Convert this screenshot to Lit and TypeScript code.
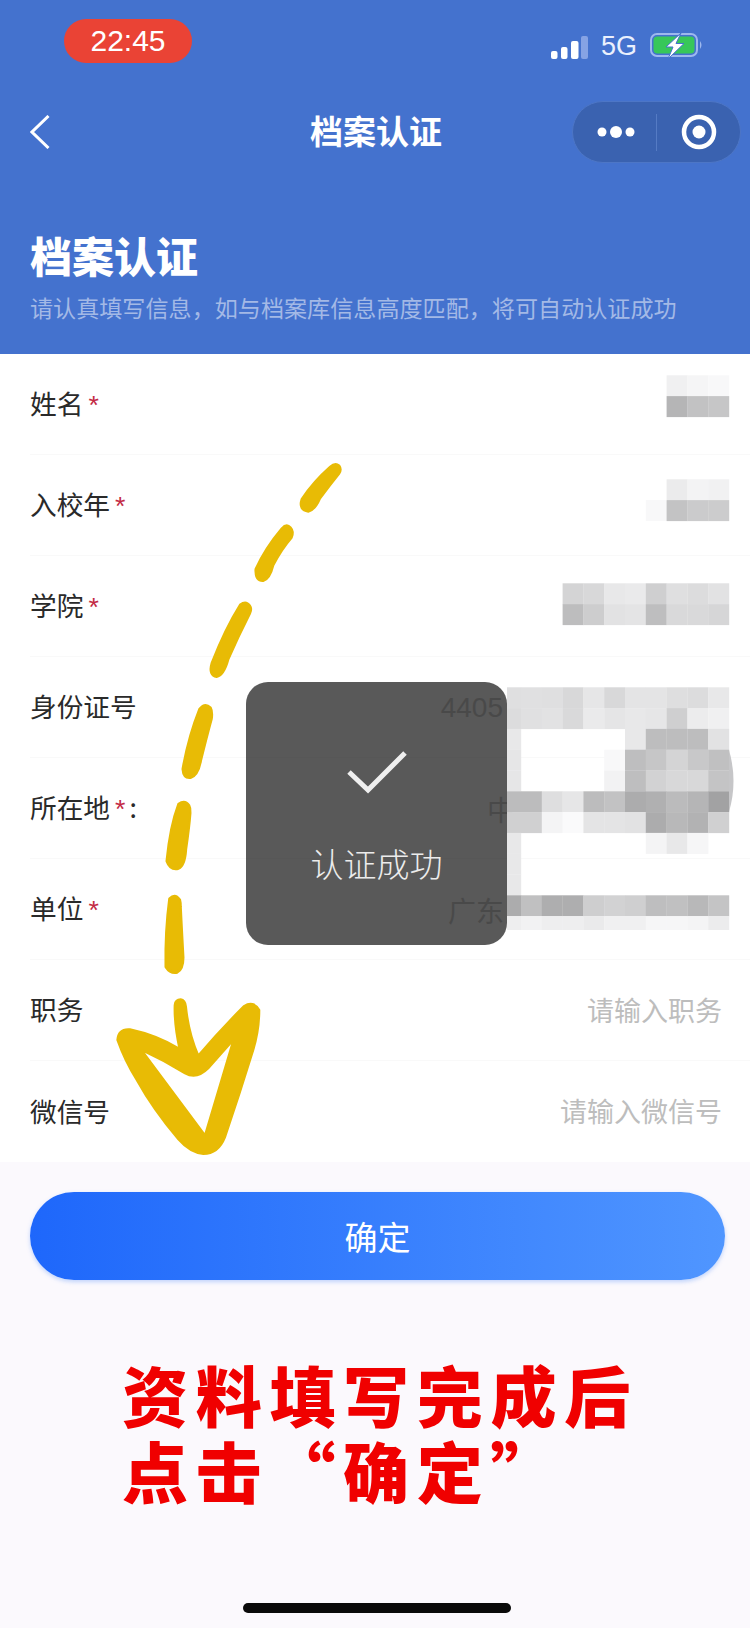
import { LitElement, html, svg, css } from 'lit';
import { customElement } from 'lit/decorators.js';

interface FormRow {
    label: string;
    required?: boolean;
    colon?: boolean;
    value?: string;
    valueGap?: number;
    placeholder?: string;
}

const ROWS: FormRow[] = [
    { label: '姓名', required: true },
    { label: '入校年', required: true },
    { label: '学院', required: true },
    { label: '身份证号', value: '4405', valueGap: 219 },
    { label: '所在地', required: true, colon: true, value: '中', valueGap: 207 },
    { label: '单位', required: true, value: '广东', valueGap: 218 },
    { label: '职务', placeholder: '请输入职务' },
    { label: '微信号', placeholder: '请输入微信号' },
];

// mosaic over the personal data: grid row, first column, grey levels
const CELL = 20.8;
const MOSAIC: [number, number, number[]][] = [
    [0, 8, [240, 245, 248]],
    [1, 8, [181, 194, 198]],
    [5, 8, [235, 243, 241]],
    [6, 7, [248, 195, 203, 204]],
    [10, 3, [212, 216, 232, 234, 207, 223, 220, 226]],
    [11, 3, [189, 205, 226, 228, 190, 217, 217, 214]],
    [15, 0, [223, 224, 223, 216, 230, 216, 228, 228, 222, 220, 232]],
    [16, 0, [220, 224, 226, 217, 234, 229, 232, 230, 207, 236, 240]],
    [17, 0, [232]],
    [17, 6, [232, 189, 189, 189, 226]],
    [18, 0, [230]],
    [18, 5, [248, 190, 198, 212, 200, 192]],
    [19, 0, [230]],
    [19, 5, [242, 190, 210, 216, 216, 196]],
    [20, 0, [188, 188, 222, 230, 188, 194, 172, 176, 187, 181, 162]],
    [21, 0, [208, 208, 244, 250, 228, 228, 226, 172, 184, 178, 208]],
    [22, 0, [232]],
    [22, 7, [244, 232, 246]],
    [23, 0, [232]],
    [24, 0, [232]],
    [25, 0, [172, 192, 174, 174, 206, 210, 207, 190, 192, 184, 196]],
    [26, 0, [238, 242, 238, 238, 234, 240, 240, 246, 246, 244, 236]],
];

// hand drawn dashes of the yellow arrow, traced as filled outlines
const DASHES = [
    'M718 35 Q705 28 690 38 Q640 70 605 108 Q595 130 625 133 Q645 130 660 105 Q690 75 718 50 Q725 42 718 35 Z',
    'M572 170 Q560 160 545 172 Q495 215 467 260 Q465 285 490 284 Q510 280 520 250 Q545 215 575 190 Q582 178 572 170 Z',
    'M450 340 Q438 328 420 338 Q375 390 335 465 Q325 490 350 493 Q372 490 385 455 Q415 405 450 355 Q456 346 450 340 Z',
    'M332 562 Q315 550 298 565 Q265 625 248 695 Q250 715 272 713 Q295 708 303 675 Q320 625 335 585 Q338 570 332 562 Z',
    'M268 775 Q255 762 235 772 Q210 820 200 895 Q210 915 235 911 Q255 905 258 870 Q268 820 271 790 Q272 780 268 775 Z',
    'M240 980 Q225 965 208 978 Q195 1050 197 1125 Q210 1140 232 1137 Q250 1130 250 1105 Q245 1040 242 995 Q242 985 240 980 Z',
];

@customElement('app-root')
export class AppRoot extends LitElement {
    static override styles = css`
        :host {
            display: block;
            width: 750px;
            height: 1628px;
            background: #fbf9fd;
            font-family: "Noto Sans CJK SC", "Noto Sans", sans-serif;
            color: #2a2a2a;
            overflow: hidden;
        }

        .page {
            position: relative;
            width: 750px;
            height: 1628px;
        }

        .header {
            height: 354px;
            background: #4472ce;
            color: #fff;
        }

        .status {
            height: 82px;
            box-sizing: border-box;
            padding: 19px 47px 0 64px;
            display: flex;
            justify-content: space-between;
            align-items: flex-start;
        }

        .time {
            width: 128px;
            height: 44px;
            border-radius: 22px;
            background: #ea4335;
            font-family: "Liberation Sans", sans-serif;
            font-size: 30px;
            line-height: 44px;
            text-align: center;
        }

        .indicators {
            display: flex;
            align-items: flex-end;
            height: 40px;
        }

        .net {
            font-family: "Liberation Sans", sans-serif;
            font-size: 27px;
            line-height: 26px;
            color: #eaf0fd;
            margin: 0 13px;
        }

        .nav {
            margin-top: 19px;
            height: 62px;
            padding: 0 9px;
            display: grid;
            grid-template-columns: 1fr auto 1fr;
            align-items: center;
        }

        .back {
            margin-left: 21px;
            display: block;
        }

        .nav-title {
            font-size: 33px;
            font-weight: 700;
            line-height: 58px;
            padding: 0 0 4px 2px;
        }

        .capsule {
            justify-self: end;
            width: 169px;
            height: 62px;
            box-sizing: border-box;
            border-radius: 31px;
            background: #3a62b0;
            border: 1px solid #4d76c6;
            display: flex;
            align-items: center;
        }

        .capsule svg {
            flex: 1;
            display: block;
        }

        .capsule i {
            width: 1px;
            height: 37px;
            background: #557bc4;
        }

        .intro {
            margin-top: 67px;
            padding-left: 30px;
        }

        .intro h1 {
            margin: 0;
            font-size: 42px;
            line-height: 50px;
            font-weight: 900;
        }

        .intro p {
            margin: 12px 0 0;
            font-size: 23.1px;
            line-height: 30px;
            color: #a3b9e6;
            white-space: nowrap;
        }

        .form {
            background: #fff;
        }

        .row {
            height: 101px;
            box-sizing: border-box;
            margin-left: 30px;
            padding-right: 28px;
            border-bottom: 1px solid #f9f9f9;
            display: flex;
            align-items: center;
            justify-content: space-between;
            font-size: 26.7px;
        }

        .row:last-child {
            border-bottom: 0;
        }

        .label {
            padding-bottom: 3px;
        }

        .star {
            color: #c32a45;
            font-family: "Liberation Sans", sans-serif;
            margin-left: 5px;
        }

        .colon {
            margin-left: 4px;
        }

        .value {
            font-family: "Liberation Sans", "Noto Sans CJK SC", sans-serif;
            font-size: 28px;
            padding-top: 2px;
            color: #d2d2d2;
        }

        .placeholder {
            color: #bdbdbd;
            font-size: 27px;
            padding-bottom: 2px;
        }

        .submit {
            margin: 30px 25px 0 30px;
            height: 88px;
            border-radius: 44px;
            background: linear-gradient(90deg, #1e67fb, #5096ff);
            box-shadow: 0 2px 4px rgba(80, 140, 250, 0.35);
            color: #fff;
            font-size: 33px;
            line-height: 88px;
            text-align: center;
        }

        .note {
            margin-top: 75px;
            padding-left: 122px;
            color: #f00000;
            font-size: 66px;
            line-height: 76px;
            font-weight: 900;
            letter-spacing: 7.7px;
            white-space: nowrap;
        }

        .home {
            margin: 96px 0 0 243px;
            width: 268px;
            height: 10px;
            border-radius: 5px;
            background: #0a0a0a;
        }

        .mosaic,
        .scribble {
            position: absolute;
            display: block;
        }

        .mosaic {
            left: 507px;
            top: 360px;
        }

        .scribble {
            left: 0;
            top: 0;
        }

        .toast {
            position: absolute;
            left: 246px;
            top: 682px;
            width: 261px;
            height: 263px;
            border-radius: 22px;
            background: rgba(0, 0, 0, 0.65);
            color: #ececec;
            display: flex;
            flex-direction: column;
            align-items: center;
        }

        .toast svg {
            margin-top: 68px;
            display: block;
        }

        .toast span {
            margin-top: 47px;
            font-size: 33px;
            line-height: 44px;
            font-weight: 300;
        }
    `;

    private _renderMosaic() {
        return html`
            <svg class="mosaic" width="230" height="570" viewBox="507 360 230 570" aria-hidden="true">
                ${MOSAIC.map(([row, first, greys]) => greys.map((grey, i) => svg`
                    <rect
                        x=${500.2 + (first + i) * CELL}
                        y=${375.3 + row * CELL}
                        width=${CELL + 0.2}
                        height=${CELL + 0.2}
                        fill=${`rgb(${grey},${grey},${Math.min(255, grey + 1)})`}
                    ></rect>
                `))}
                <path d="M729 750 Q738 781 729 812 Z" fill="#c6c6c8"></path>
            </svg>
        `;
    }

    private _renderScribble() {
        return html`
            <svg class="scribble" width="750" height="1628" viewBox="0 0 750 1628" aria-hidden="true">
                <g transform="translate(100 450) scale(0.3333 0.4592)" fill="#e8bb05" stroke="#e8bb05" stroke-width="7" stroke-linejoin="round">
                    ${DASHES.map((d) => svg`<path d=${d}></path>`)}
                </g>
                <g transform="translate(100 980) scale(0.3333)">
                    <path
                        fill="#e8bb05"
                        stroke="#e8bb05"
                        stroke-width="6"
                        stroke-linejoin="round"
                        fill-rule="evenodd"
                        d="M52 180 Q55 145 90 148 Q170 165 238 206 Q222 130 224 75 Q226 58 242 58 Q256 60 258 80 Q266 160 295 226 Q360 150 432 78 Q460 60 478 90 Q478 150 460 210 Q420 340 375 472 Q355 522 310 522 Q270 518 235 478 Q160 390 110 300 Q75 245 52 180 Z
                        M125 210 L315 465 L400 180 Q360 225 325 265 Q290 300 255 280 Q190 240 125 210 Z"
                    ></path>
                </g>
            </svg>
        `;
    }

    override render() {
        return html`
            <div class="page">
                <div class="header">
                    <div class="status">
                        <div class="time">22:45</div>
                        <div class="indicators">
                            <svg width="37" height="23" viewBox="0 0 37 23" aria-hidden="true">
                                <rect x="0" y="15" width="6.5" height="8" rx="2" fill="#fff"></rect>
                                <rect x="10" y="11" width="6.5" height="12" rx="2" fill="#fff"></rect>
                                <rect x="20" y="5" width="7.5" height="18" rx="2" fill="#fff"></rect>
                                <rect x="30" y="0" width="7" height="23" rx="2" fill="#86a3e4"></rect>
                            </svg>
                            <span class="net">5G</span>
                            <svg width="53" height="26" viewBox="0 0 53 26" aria-hidden="true">
                                <rect x="1" y="1" width="46" height="22" rx="6" fill="none" stroke="#9db8ee" stroke-width="2"></rect>
                                <rect x="3.5" y="3.5" width="41" height="17" rx="4" fill="#37c75a"></rect>
                                <path d="M50 8 Q53 12 50 16 Z" fill="#9db8ee"></path>
                                <path d="M31 0 L16 14 H23 L18 26 L34 10.5 H26 Z" fill="#fff" stroke="#4472ce" stroke-width="1" stroke-linejoin="round"></path>
                            </svg>
                        </div>
                    </div>
                    <div class="nav">
                        <svg class="back" width="20" height="34" viewBox="0 0 20 34" fill="none" aria-hidden="true">
                            <path d="M18.5 1 L2 17 L18.5 33" stroke="#fff" stroke-width="3"></path>
                        </svg>
                        <div class="nav-title">档案认证</div>
                        <div class="capsule">
                            <svg height="40" viewBox="0 0 83 40" aria-hidden="true">
                                <circle cx="29" cy="20" r="4.5" fill="#fff"></circle>
                                <circle cx="43" cy="20" r="6" fill="#fff"></circle>
                                <circle cx="57" cy="20" r="4.5" fill="#fff"></circle>
                            </svg>
                            <i></i>
                            <svg height="40" viewBox="0 0 83 40" aria-hidden="true">
                                <circle cx="42" cy="20" r="15" fill="none" stroke="#fff" stroke-width="4.5"></circle>
                                <circle cx="42" cy="20" r="6.5" fill="#fff"></circle>
                            </svg>
                        </div>
                    </div>
                    <div class="intro">
                        <h1>档案认证</h1>
                        <p>请认真填写信息，如与档案库信息高度匹配，将可自动认证成功</p>
                    </div>
                </div>

                <div class="form">
                    ${ROWS.map((row) => html`
                        <div class="row">
                            <div class="label">
                                ${row.label}${row.required ? html`<span class="star">*</span>` : ''}${row.colon ? html`<span class="colon">:</span>` : ''}
                            </div>
                            ${row.value ? html`<div class="value" style=${`margin-right:${row.valueGap}px`}>${row.value}</div>` : ''}
                            ${row.placeholder ? html`<div class="placeholder">${row.placeholder}</div>` : ''}
                        </div>
                    `)}
                </div>

                <div class="submit">确定</div>
                <div class="note">资料填写完成后<br>点击“确定”</div>
                <div class="home"></div>

                ${this._renderMosaic()}
                ${this._renderScribble()}

                <div class="toast">
                    <svg width="60" height="44" viewBox="0 0 60 44" fill="none" aria-hidden="true">
                        <path d="M2 22 L21 40 L58 3" stroke="#efefef" stroke-width="5"></path>
                    </svg>
                    <span>认证成功</span>
                </div>
            </div>
        `;
    }
}
